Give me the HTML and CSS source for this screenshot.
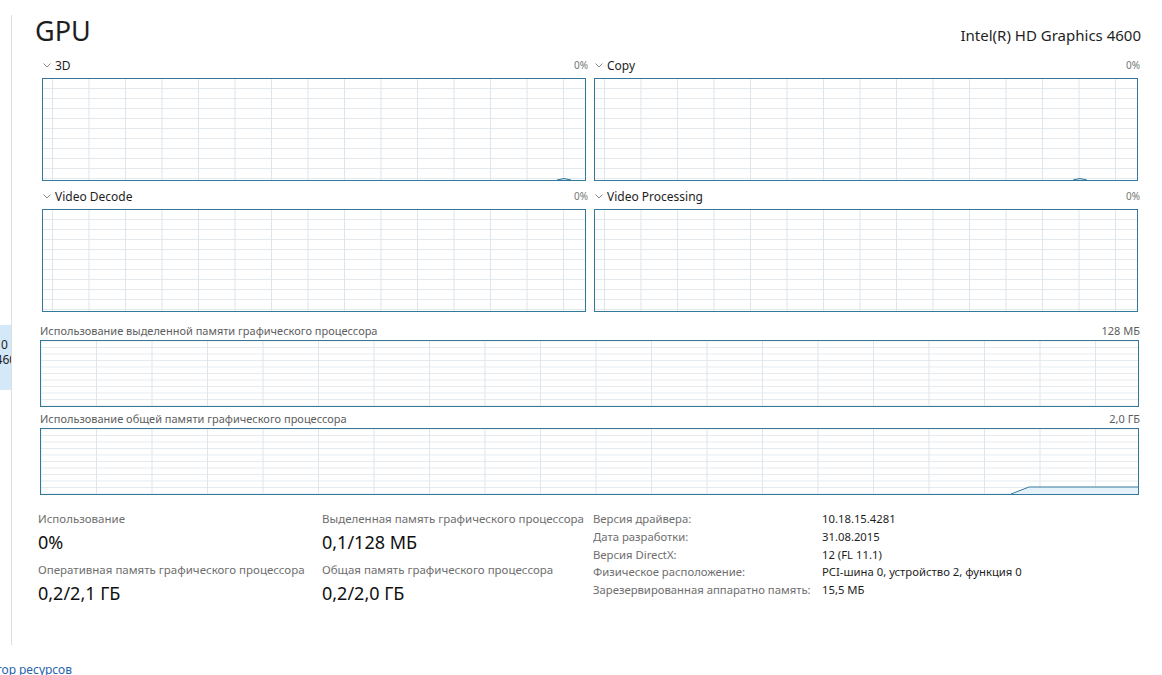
FILE: index.html
```html
<!DOCTYPE html>
<html lang="ru">

<head>
    <meta charset="UTF-8">
    <meta name="viewport" content="width=device-width, initial-scale=1.0">
    <title>Диспетчер задач — GPU</title>
    <link rel="stylesheet" href="styles.css">
</head>

<body>
    <div class="app">
        <aside class="sidebar">
            <div class="side-list">
                <div class="side-item">
                    <div class="side-line"><span class="clip1">Графический процессор 0</span></div>
                    <div class="side-line"><span class="clip2">Intel(R) HD Graphics 4600</span></div>
                </div>
            </div>
        </aside>

        <main class="panel">
            <header class="head">
                <h1 class="title">GPU</h1>
                <div class="adapter">Intel(R) HD Graphics 4600</div>
            </header>

            <section class="engines">
                <div class="engine">
                    <div class="engine-head">
                        <svg class="chev" width="8" height="5" viewBox="0 0 8 5"><polyline points="0.5,0.5 4,4 7.5,0.5" /></svg>
                        <span class="engine-name">3D</span>
                        <span class="pct">0%</span>
                    </div>
                    <div class="chart small">
                        <svg class="blip blip-3d" width="14" height="3" viewBox="0 0 14 3"><path d="M0 3 Q7 0 14 3" /></svg>
                    </div>
                </div>
                <div class="engine">
                    <div class="engine-head">
                        <svg class="chev" width="8" height="5" viewBox="0 0 8 5"><polyline points="0.5,0.5 4,4 7.5,0.5" /></svg>
                        <span class="engine-name">Copy</span>
                        <span class="pct">0%</span>
                    </div>
                    <div class="chart small">
                        <svg class="blip blip-copy" width="14" height="3" viewBox="0 0 14 3"><path d="M0 3 Q7 0 14 3" /></svg>
                    </div>
                </div>
                <div class="engine">
                    <div class="engine-head">
                        <svg class="chev" width="8" height="5" viewBox="0 0 8 5"><polyline points="0.5,0.5 4,4 7.5,0.5" /></svg>
                        <span class="engine-name">Video Decode</span>
                        <span class="pct">0%</span>
                    </div>
                    <div class="chart small"></div>
                </div>
                <div class="engine">
                    <div class="engine-head">
                        <svg class="chev" width="8" height="5" viewBox="0 0 8 5"><polyline points="0.5,0.5 4,4 7.5,0.5" /></svg>
                        <span class="engine-name">Video Processing</span>
                        <span class="pct">0%</span>
                    </div>
                    <div class="chart small"></div>
                </div>
            </section>

            <section class="memory">
                <div class="mem-head">
                    <span>Использование выделенной памяти графического процессора</span>
                    <span>128 МБ</span>
                </div>
                <div class="chart wide"></div>

                <div class="mem-head">
                    <span>Использование общей памяти графического процессора</span>
                    <span>2,0 ГБ</span>
                </div>
                <div class="chart wide">
                    <svg class="usage" viewBox="0 0 1097 65" preserveAspectRatio="none">
                        <polygon class="usage-fill" points="970,65 988,58 1097,58 1097,65" />
                        <polyline class="usage-line" points="970,65 988,58 1097,58" />
                    </svg>
                </div>
            </section>

            <section class="stats">
                <div class="stat-col">
                    <div class="stat-label">Использование</div>
                    <div class="stat-value">0%</div>
                    <div class="stat-label">Оперативная память графического процессора</div>
                    <div class="stat-value">0,2/2,1 ГБ</div>
                </div>
                <div class="stat-col">
                    <div class="stat-label">Выделенная память графического процессора</div>
                    <div class="stat-value">0,1/128 МБ</div>
                    <div class="stat-label">Общая память графического процессора</div>
                    <div class="stat-value">0,2/2,0 ГБ</div>
                </div>
                <dl class="details">
                    <dt>Версия драйвера:</dt>
                    <dd>10.18.15.4281</dd>
                    <dt>Дата разработки:</dt>
                    <dd>31.08.2015</dd>
                    <dt>Версия DirectX:</dt>
                    <dd>12 (FL 11.1)</dd>
                    <dt>Физическое расположение:</dt>
                    <dd>PCI-шина 0, устройство 2, функция 0</dd>
                    <dt>Зарезервированная аппаратно память:</dt>
                    <dd>15,5 МБ</dd>
                </dl>
            </section>
        </main>
    </div>

    <footer class="footer">
        <a class="monitor-link" href="#">Открыть монитор ресурсов</a>
    </footer>
</body>

</html>
```

FILE: styles.css
```css
* {
    padding: 0;
    margin: 0;
    box-sizing: border-box;
}

html,
body {
    width: 1162px;
    height: 675px;
    overflow: hidden;
    background-color: white;
    color: #1e1e1e;
    font-family: "Noto Sans", "Open Sans", sans-serif;
}

.app {
    display: flex;
    height: 659px;
}

/* левая колонка со списком устройств */
.sidebar {
    width: 12px;
    flex-shrink: 0;
    padding-top: 15px;
}

.side-list {
    height: 630px;
    border-right: 1px solid #dedede;
    padding-top: 310px;
}

.side-item {
    height: 65px;
    width: 11px;
    background-color: #d3e8f8;
    padding-top: 12px;
    overflow: hidden;
}

.side-line {
    display: flex;
    justify-content: flex-end;
    white-space: nowrap;
    font-size: 12px;
    line-height: 15px;
}

.clip1 {
    margin-right: 3px;
}

.clip2 {
    margin-right: -12px;
}

/* основная панель */
.panel {
    flex: 1;
    padding: 13px 22px 0 28px;
}

.head {
    display: flex;
    justify-content: space-between;
    align-items: baseline;
    height: 42px;
}

.title {
    font-size: 27px;
    font-weight: 400;
    line-height: 36px;
    margin-left: -5px;
}

.adapter {
    font-size: 15px;
    margin-right: -1px;
}

.engines {
    display: grid;
    grid-template-columns: 1fr 1fr;
    column-gap: 8px;
    row-gap: 5px;
    margin: 0 2px 0 2px;
}

.engine-head {
    display: flex;
    align-items: center;
    height: 20px;
    margin-bottom: 3px;
    font-size: 12px;
}

.chev {
    margin-left: 1px;
    margin-right: 4px;
    fill: none;
    stroke: #8a8a8a;
    stroke-width: 1;
}

.engine-name {
    flex: 1;
}

.pct {
    font-size: 10px;
    color: #767676;
    margin-right: -2px;
}

.chart {
    position: relative;
    border: 1px solid #33789a;
    background-color: white;
    background-image:
        linear-gradient(to right, #dfe5ea 1px, transparent 1px),
        linear-gradient(to bottom, #e4e9ed 1px, transparent 1px);
}

.chart.small {
    height: 103px;
    background-size: 36.5px 100%, 100% 10px;
    background-position: 9px 0, 0 9px;
}

.chart.wide {
    height: 67px;
    margin-right: 1px;
    background-size: 55.5px 100%, 100% 6.5px;
    background-position: 55px 0, 0 6px;
}

.blip {
    position: absolute;
    bottom: 0;
    fill: #d6eaf7;
    stroke: #33789a;
    stroke-width: 1;
}

.blip-3d {
    right: 14px;
}

.blip-copy {
    right: 50px;
}

.usage {
    position: absolute;
    left: 0;
    top: 0;
    width: 100%;
    height: 100%;
}

.usage-fill {
    fill: #e6f2fa;
}

.usage-line {
    fill: none;
    stroke: #33789a;
    stroke-width: 1;
    vector-effect: non-scaling-stroke;
}

.memory {
    margin-top: 8px;
}

.mem-head {
    display: flex;
    justify-content: space-between;
    align-items: center;
    height: 20px;
    font-size: 11px;
    color: #5e5e5e;
}

.chart.wide + .mem-head {
    margin-top: 1px;
}

/* нижний блок с цифрами */
.stats {
    display: grid;
    grid-template-columns: 284px 271px 1fr;
    margin: 15px 0 0 -2px;
}

.stat-label {
    font-size: 11.5px;
    line-height: 18px;
    color: #6e6e6e;
    white-space: nowrap;
}

.stat-value {
    font-size: 18px;
    line-height: 28px;
    margin-bottom: 5px;
    color: #111;
}

.details {
    display: grid;
    grid-template-columns: 229px 1fr;
    grid-auto-rows: 17.75px;
    margin-top: 1px;
    font-size: 11.3px;
    white-space: nowrap;
}

.details dt,
.details dd {
    height: 17.75px;
    line-height: 16px;
    overflow: hidden;
}

.details dt {
    color: #6e6e6e;
}

.details dd {
    color: #1e1e1e;
}

.footer {
    width: 72px;
    height: 16px;
    display: flex;
    justify-content: flex-end;
    overflow: hidden;
    padding-top: 3px;
}

.monitor-link {
    font-size: 12px;
    line-height: 15px;
    color: #1e62b0;
    text-decoration: none;
    white-space: nowrap;
}
```
